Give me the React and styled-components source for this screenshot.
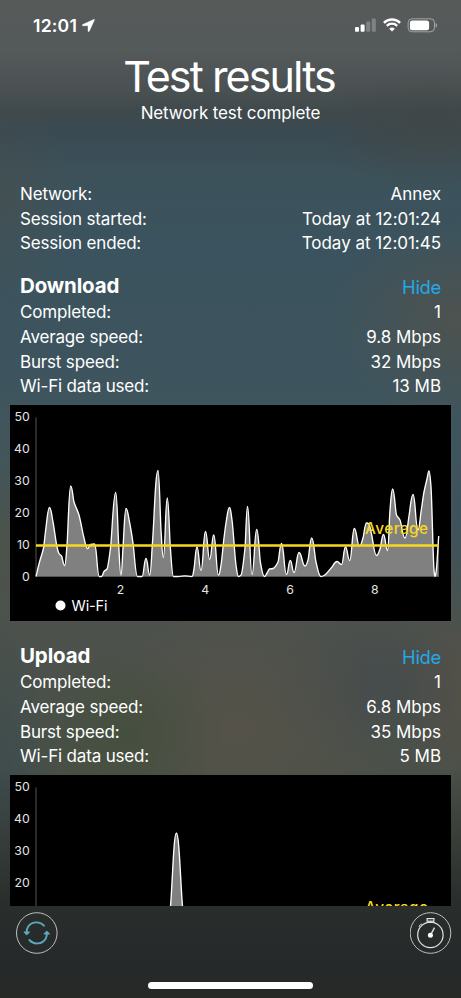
import styled, { createGlobalStyle } from "styled-components";

const GlobalStyle = createGlobalStyle`
  * {
    box-sizing: border-box;
  }
  body {
    margin: 0;
    font-family: Inter, "Liberation Sans", sans-serif;
    color: #ffffff;
  }
`;

const Screen = styled.div`
  display: flex;
  flex-direction: column;
  width: 461px;
  height: 998px;
  overflow: hidden;
  background:
    linear-gradient(to bottom, transparent 770px, rgba(40, 43, 42, 0.5) 850px, rgba(37, 41, 41, 0.8) 906px, #252929 965px, #272927 100%),
    radial-gradient(130px 100px at 461px 320px, rgba(85, 82, 72, 0.7), transparent),
    radial-gradient(100px 90px at 125px 735px, rgba(65, 78, 57, 0.7), transparent),
    radial-gradient(160px 140px at 235px 730px, rgba(88, 83, 73, 0.75), transparent),
    radial-gradient(100px 80px at 370px 690px, rgba(68, 74, 77, 0.8), transparent),
    radial-gradient(60px 160px at 0 780px, rgba(58, 75, 78, 0.8), transparent),
    radial-gradient(40px 130px at 461px 510px, rgba(59, 83, 94, 0.9), transparent),
    radial-gradient(70px 90px at 461px 690px, rgba(86, 80, 71, 0.8), transparent),
    radial-gradient(70px 110px at 0 200px, rgba(72, 79, 77, 0.6), transparent),
    radial-gradient(110px 60px at 430px 130px, rgba(66, 70, 68, 0.7), transparent),
    linear-gradient(to bottom, #575a59 0, #54595a 50px, #4c5253 85px, #3f494c 112px, #3a4a52 132px, #3c515a 172px, #3b535e 240px, #3d545e 370px, #42565a 450px, #4c534b 550px, #4c514c 640px, #4b5149 760px, #454b43 850px, #3a403b 906px);
`;

const StatusBar = styled.div`
  display: flex;
  justify-content: space-between;
  height: 50px;
  padding: 14px 23px 0 33px;
`;

const Clock = styled.div`
  display: flex;
  align-items: center;
  gap: 5px;
  height: 22px;
  font-size: 17.6px;
  font-weight: 600;
  letter-spacing: 0.2px;
`;

const StatusIcons = styled.div`
  display: flex;
  align-items: center;
  gap: 6px;
  height: 22px;
`;

const Header = styled.header`
  display: flex;
  flex-direction: column;
  align-items: center;
  height: 132px;
`;

const Title = styled.h1`
  margin: 0;
  padding-right: 3px;
  font-size: 43px;
  font-weight: 400;
  line-height: 52px;
  letter-spacing: -1.9px;
`;

const Subtitle = styled.div`
  font-size: 17px;
  line-height: 22px;
  letter-spacing: -0.12px;
`;

const Results = styled.main`
  height: 724px;
  overflow: hidden;
`;

const Group = styled.section`
  padding-top: ${(props) => props.$top}px;
`;

const Row = styled.div`
  display: flex;
  justify-content: space-between;
  height: 24.6px;
  padding: 0 20px;
  font-size: 17px;
  line-height: 24.6px;
`;

const Label = styled.span`
  letter-spacing: -0.17px;
`;

const Value = styled.span`
  letter-spacing: -0.03px;
`;

const Heading = styled.div`
  display: flex;
  justify-content: space-between;
  align-items: center;
  height: 29px;
  padding: 0 20px;
`;

const HeadingText = styled.h2`
  margin: 0;
  font-size: 20.5px;
  font-weight: 700;
  letter-spacing: -0.15px;
`;

const HideButton = styled.button`
  border: none;
  padding: 2px 0 0;
  background: none;
  color: #27a7e5;
  font-family: inherit;
  font-size: 18.4px;
  letter-spacing: -0.3px;
`;

const ChartBox = styled.div`
  height: ${(props) => props.$height}px;
  margin: 6px 10px 0;
  background: #000000;
  overflow: hidden;

  svg {
    display: block;
    font-size: 12.3px;
  }
`;

const Toolbar = styled.footer`
  display: flex;
  justify-content: space-between;
  height: 75px;
  padding: 6px 9px 0 16px;
`;

const RoundButton = styled.button`
  width: 42px;
  height: 42px;
  border: none;
  padding: 0;
  background: none;

  svg {
    display: block;
  }
`;

const HomeIndicator = styled.div`
  width: 165px;
  height: 7px;
  margin: 1px auto 0;
  border-radius: 4px;
  background: #ffffff;
`;

// points are in chart pixels, the zero line is at y = 171.5
const downloadPoints = [
  [26, 171.5], [29.5, 157], [33.5, 143], [35.8, 124], [39.5, 102.5], [43, 117],
  [47, 142], [49, 148.5], [51.5, 151], [54.7, 160.5], [57, 140], [60.7, 81],
  [64, 97], [69, 110], [74, 133], [77.5, 143.5], [80.5, 139.5], [84.5, 139],
  [89.3, 171.5], [91.5, 171.5], [94, 166.5], [97, 164], [100.5, 143], [105.7, 87.5],
  [108.7, 140], [111, 170], [113, 143], [116, 103.5], [119.5, 117], [123, 138],
  [127.5, 171.5], [132, 171.5], [136, 153.5], [139.7, 170], [142.5, 137], [148, 65.5],
  [151, 125], [153.3, 152.5], [157.3, 93], [160.3, 142], [163.5, 171.5], [168, 171.5],
  [175, 170.8], [182, 171.5], [184, 164], [187, 142], [191, 165.5], [195.5, 126.5],
  [199.7, 154.5], [203.7, 130], [208.5, 170], [211, 160], [214, 133], [216, 118],
  [219.5, 102.5], [222, 115], [226, 160], [228.5, 171.5], [231, 170], [235, 143],
  [237.5, 101.5], [242, 169.5], [246.7, 124.5], [250.5, 158], [254.5, 171.5],
  [257, 168], [259.5, 164], [263, 163.5], [268, 157], [271.5, 138.5], [276.5, 169.5],
  [280.3, 155.5], [284, 167.5], [289, 147.5], [295, 161], [298, 155], [301.7, 133],
  [306, 157], [311, 171.5], [314, 170.5], [322, 162], [327, 156.5], [331.5, 159.5],
  [335.5, 142], [339.7, 155.5], [344.3, 123.5], [349.5, 141], [353, 133], [356.5, 118],
  [359, 119], [361.5, 129], [366.5, 150.5], [370, 144], [373.5, 129.5], [377.5, 145.5],
  [380, 105], [382.6, 84], [386.5, 110], [390, 115], [395, 133], [399, 111],
  [403, 89.5], [408, 125], [411, 107], [414, 87], [417, 74], [419, 66], [421, 82],
  [424, 165], [425, 171.5], [426.3, 165], [428.7, 131],
];

const uploadPoints = [
  [26, 171.5], [156, 171.5], [160.5, 131], [166.4, 58], [172.5, 131], [177, 171.5],
  [428.7, 171.5],
];

// flat tangents on peaks and valleys, so the curve never dips below zero
function curvePath(points) {
  const slope = (a, b) => (b[1] - a[1]) / (b[0] - a[0]);
  const tangents = points.map((point, i) => {
    if (i === 0) return slope(point, points[1]);
    if (i === points.length - 1) return slope(points[i - 1], point);
    const before = slope(points[i - 1], point);
    const after = slope(point, points[i + 1]);
    if (before * after <= 0) return 0;
    return (2 * before * after) / (before + after);
  });
  let d = `M${points[0][0]} ${points[0][1]}`;
  for (let i = 1; i < points.length; i++) {
    const [x0, y0] = points[i - 1];
    const [x1, y1] = points[i];
    // longer handles where the curve turns, for rounder tips
    const h0 = (x1 - x0) * (tangents[i - 1] === 0 ? 0.48 : 0.3);
    const h1 = (x1 - x0) * (tangents[i] === 0 ? 0.48 : 0.3);
    d += `C${x0 + h0} ${y0 + tangents[i - 1] * h0} ${x1 - h1} ${y1 - tangents[i] * h1} ${x1} ${y1}`;
  }
  return d;
}

function SpeedChart({ points, average, height }) {
  const curve = curvePath(points);
  const averageY = 171.8 - average * 3.19;
  const scale = [50, 40, 30, 20, 10, 0]
    .map((value, i) => ({ value, y: 16 + i * 31.9 }))
    .filter((mark) => mark.y < height);
  return (
    <ChartBox $height={height}>
      <svg width="441" height="217" viewBox="0 0 441 217">
        <path d={`${curve}V171.5H26Z`} fill="#808080" />
        <path d="M26 12.5V171.5H429" fill="none" stroke="#555555" strokeWidth="1" />
        <path d={curve} fill="none" stroke="#ffffff" strokeWidth="1.35" />
        {scale.map(({ value, y }) => (
          <text key={value} x="19.7" y={y} textAnchor="end" fill="#e4e4e4">
            {value}
          </text>
        ))}
        <path d={`M26 ${averageY}H428.7`} stroke="#f8d81c" strokeWidth="2.6" />
        <text x="355" y={averageY - 12} textLength="63" fill="#f8d81c" fontSize="15.3" fontWeight="500">
          Average
        </text>
        {height > 200 && (
          <>
            {[2, 4, 6, 8].map((value) => (
              <text key={value} x={25.8 + value * 42.37} y="189" textAnchor="middle" fill="#e4e4e4">
                {value}
              </text>
            ))}
            <circle cx="50.5" cy="200.5" r="5" fill="#ffffff" />
            <text x="61.5" y="205.7" textLength="36" fill="#ffffff" fontSize="14.5">
              Wi-Fi
            </text>
          </>
        )}
      </svg>
    </ChartBox>
  );
}

function ResultRow({ label, value }) {
  return (
    <Row>
      <Label>{label}</Label>
      <Value>{value}</Value>
    </Row>
  );
}

function SpeedGroup({ title, top, speed, burst, data, points, average, chartHeight }) {
  return (
    <Group $top={top}>
      <Heading>
        <HeadingText>{title}</HeadingText>
        <HideButton>Hide</HideButton>
      </Heading>
      <ResultRow label="Completed:" value="1" />
      <ResultRow label="Average speed:" value={speed} />
      <ResultRow label="Burst speed:" value={burst} />
      <ResultRow label="Wi-Fi data used:" value={data} />
      <SpeedChart points={points} average={average} height={chartHeight} />
    </Group>
  );
}

function LocationIcon() {
  return (
    <svg width="13" height="13" viewBox="0 0 13 13">
      <path d="M11.8 0.4 0.7 5.5C-0.1 5.9 0.1 6.8 0.9 6.8H5.6C5.9 6.8 6 6.9 6 7.2V11.9C6 12.8 7 12.9 7.4 12.1L12.4 1.1C12.6 0.5 12.3 0.2 11.8 0.4Z" fill="#fff" stroke="#fff" strokeWidth="0.4" />
    </svg>
  );
}

function SignalIcon() {
  return (
    <svg width="22" height="14" viewBox="0 0 22 14" fill="#fff">
      <rect x="0" y="9" width="4" height="4.7" rx="1" />
      <rect x="5.6" y="6.5" width="4" height="7.2" rx="1" />
      <rect x="11.2" y="3.6" width="4" height="10.1" rx="1" opacity="0.25" />
      <rect x="16.8" y="0.5" width="4" height="13.2" rx="1" opacity="0.25" />
    </svg>
  );
}

function WifiIcon() {
  return (
    <svg width="18" height="14" viewBox="0 0 18 14" fill="none" stroke="#fff">
      <path d="M0.9 4.8C5.4 0.3 12.6 0.3 17.1 4.8" strokeWidth="2.4" />
      <path d="M3.8 7.8C6.7 5 11.3 5 14.2 7.8" strokeWidth="2.3" />
      <path d="M9 13.5 6.2 10.7C7.7 9.2 10.3 9.2 11.8 10.7Z" fill="#fff" stroke="none" />
    </svg>
  );
}

function BatteryIcon() {
  return (
    <svg width="31" height="15" viewBox="0 0 31 15">
      <rect x="1.1" y="0.8" width="26.4" height="13" rx="4" fill="none" stroke="#fff" strokeOpacity="0.45" />
      <rect x="2.9" y="2.4" width="19.2" height="9.8" rx="2.5" fill="#fff" />
      <path d="M28.7 5C30.4 5.7 30.4 8.9 28.7 9.6Z" fill="#fff" fillOpacity="0.5" />
    </svg>
  );
}

function RefreshIcon() {
  return (
    <svg width="42" height="42" viewBox="0 0 42 42" fill="none">
      <circle cx="20.8" cy="21" r="20.3" stroke="#bfbfbf" />
      <g stroke="#5aa9ba" strokeWidth="1.9" strokeLinecap="round" strokeLinejoin="round">
        <path d="M28 13.7C23.5 8.7 15.3 9.5 11.9 15.1C10.9 16.8 10.5 19 10.7 21.4" />
        <path d="M8.2 20 10.7 22.7 13.3 20Z" fill="#5aa9ba" strokeWidth="1.2" />
        <path d="M13.4 28C17.9 33.1 26.2 32.4 29.6 26.7C30.6 25 31 23 30.9 20.8" />
        <path d="M28.2 22 30.8 19.3 33.3 22Z" fill="#5aa9ba" strokeWidth="1.2" />
      </g>
    </svg>
  );
}

function StopwatchIcon() {
  return (
    <svg width="42" height="42" viewBox="0 0 42 42" fill="none">
      <circle cx="20.5" cy="21" r="20.3" stroke="#bfbfbf" />
      <g stroke="#e2e2e2" strokeWidth="1.2">
        <circle cx="20.4" cy="22.9" r="12.7" />
        <rect x="17.1" y="6.6" width="6.8" height="2.6" />
        <path d="M20.4 9.2V10.3M17.7 10.5H23.1" />
        <path d="M9.5 15.2 9 14.1 11.2 12.1 12.4 12.5" strokeWidth="0.9" />
        <path d="M20.4 23.3 24.5 15.7" strokeWidth="1.4" />
      </g>
      <circle cx="20.4" cy="23.3" r="2.5" fill="#fff" />
    </svg>
  );
}

function App() {
  return (
    <Screen>
      <GlobalStyle />
      <StatusBar>
        <Clock>
          12:01
          <LocationIcon />
        </Clock>
        <StatusIcons>
          <SignalIcon />
          <WifiIcon />
          <BatteryIcon />
        </StatusIcons>
      </StatusBar>
      <Header>
        <Title>Test results</Title>
        <Subtitle>Network test complete</Subtitle>
      </Header>
      <Results>
        <ResultRow label="Network:" value="Annex" />
        <ResultRow label="Session started:" value="Today at 12:01:24" />
        <ResultRow label="Session ended:" value="Today at 12:01:45" />
        <SpeedGroup
          title="Download"
          top={15.6}
          speed="9.8 Mbps"
          burst="32 Mbps"
          data="13 MB"
          points={downloadPoints}
          average={9.8}
          chartHeight={216.6}
        />
        <SpeedGroup
          title="Upload"
          top={20}
          speed="6.8 Mbps"
          burst="35 Mbps"
          data="5 MB"
          points={uploadPoints}
          average={6.8}
          chartHeight={131.4}
        />
      </Results>
      <Toolbar>
        <RoundButton aria-label="Run again">
          <RefreshIcon />
        </RoundButton>
        <RoundButton aria-label="Timer">
          <StopwatchIcon />
        </RoundButton>
      </Toolbar>
      <HomeIndicator />
    </Screen>
  );
}

export default App;
